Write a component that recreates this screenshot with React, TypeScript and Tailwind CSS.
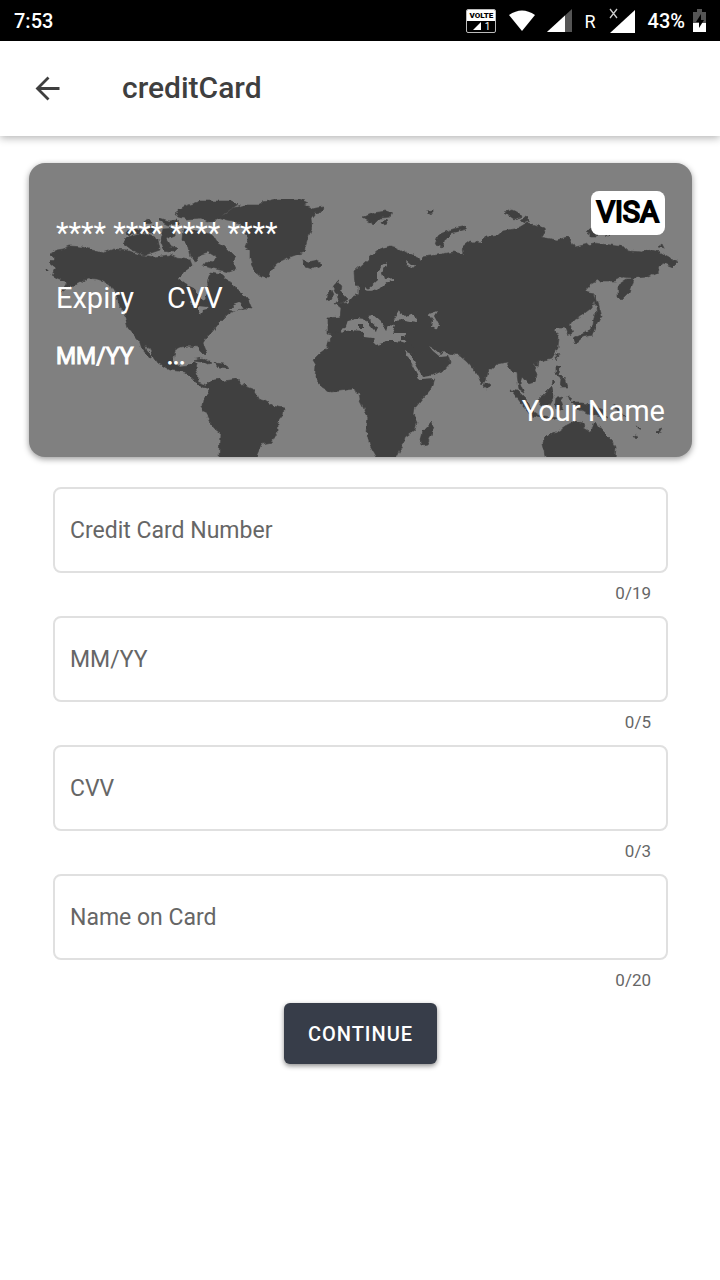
import { useState } from "react";

const LAND = [
  // North America
  "50 254 57 250 63 249 70 246 82 247 92 250 103 253 115 249 127 250 137 254 153 257 170 255 177 258 190 260 192 265 186 272 180 278 187 283 197 287 202 297 205 298 208 288 207 280 210 273 223 275 228 281 233 283 237 290 243 294 248 299 252 309 244 308 237 310 228 314 220 322 212 332 206 338 203 343 207 353 204 355 198 347 187 346 181 347 175 350 173 362 180 367 188 366 193 361 197 363 196 369 198 373 198 382 207 385 213 380 209 389 200 386 190 377 185 372 170 370 158 363 147 347 138 340 128 328 125 317 127 312 120 307 117 297 110 285 103 281 97 279 87 278 80 283 70 286 60 293 67 282 57 278 52 275 55 268 49 263 54 258",
  "139 340 144 343 147 351 152 356 149 357 142 349",
  "45 269 48 269 48 271 45 271",
  // Arctic islands
  "127 238 143 233 151 236 158 240 160 250 145 255 132 250 123 243",
  "145 221 150 219 152 223 146 224",
  "160 218 169 221 177 220 179 224 168 225 160 221",
  "126 231 136 228 143 231 150 226 156 227 153 233 141 232 127 236",
  "163 229 176 228 175 235 166 239 170 246 178 248 174 252 164 250 160 240",
  "183 229 197 231 213 235 218 243 225 247 235 257 233 265 235 270 229 272 220 270 212 268 203 266 207 261 213 262 216 257 208 252 201 254 196 261 190 257 188 247 182 240",
  "175 213 183 207 200 201 233 201 237 205 228 211 225 213 217 220 207 222 201 218 187 219 178 217",
  // Greenland and Iceland
  "218 218 225 214 233 208 245 205 260 205 263 202 277 199 300 199 308 203 304 205 312 209 323 207 322 211 315 213 311 218 312 227 308 238 305 248 304 252 290 257 282 261 277 263 271 270 269 278 260 277 252 266 250 257 250 250 245 247 248 239 245 230 240 223 228 221",
  "302 260 308 262 318 260 321 265 312 269 303 266",
  // Caribbean
  "193 360 201 358 213 363 208 364 201 361",
  "215 363 224 364 230 368 218 367",
  // South America
  "207 385 213 380 220 379 224 381 237 379 242 385 253 389 256 394 258 399 265 401 273 406 284 408 283 415 277 423 277 433 272 442 262 444 259 450 255 459 219 459 220 432 213 427 207 416 202 407 203 400 209 392",
  // Eurasia
  "328 334 328 318 340 317 341 308 336 304 347 303 352 297 359 294 359 284 364 283 366 291 372 291 366 286 355 284 354 272 365 262 373 255 380 249 390 246 398 248 407 253 418 258 420 262 423 257 437 255 453 252 463 254 462 247 470 241 480 243 487 237 497 236 503 231 520 228 528 223 545 228 546 233 540 237 557 240 567 237 571 241 575 247 593 243 610 245 625 247 627 251 643 252 647 249 660 252 668 257 678 262 673 267 663 263 660 267 658 272 647 277 635 278 623 277 615 281 597 281 591 284 585 291 593 293 596 301 590 309 578 318 572 321 570 325 574 332 568 336 565 327 558 327 555 330 559 337 558 348 552 358 538 362 532 364 537 373 535 382 528 384 522 377 520 383 524 393 519 390 517 373 512 372 507 362 497 364 488 372 486 380 482 385 478 376 473 368 468 362 460 355 447 353 450 362 442 371 433 375 422 379 400 370 350 340",
  // Africa
  "333 333 366 331 410 340 423 378 435 378 432 388 423 398 415 408 414 415 417 422 415 430 405 437 403 445 396 459 378 459 370 445 366 432 368 418 364 408 360 400 359 393 353 389 340 391 330 392 322 387 315 378 316 365 313 360 320 353 327 348 330 338",
  "432 421 434 426 431 436 427 444 422 445 421 439 423 431",
  // British Isles
  "337 282 342 285 341 291 345 296 348 299 343 303 335 304 339 299 336 293 333 287",
  "332 290 334 295 331 300 326 301 327 295",
  // Northern islands
  "363 217 373 213 386 211 392 213 390 217 380 218 372 226 368 220",
  "381 222 386 220 387 223 382 224",
  "435 245 437 238 440 234 453 229 467 226 466 229 451 233 445 239 443 247",
  "427 211 433 210 433 213 428 214",
  "504 212 513 210 519 213 521 217 514 219",
  "520 220 526 217 530 221 525 223",
  "585 232 591 229 598 236 591 236",
  "605 235 610 234 609 236",
  "658 247 662 244 664 248",
  // Eastern islands
  "627 279 634 279 630 292 622 300 618 296 618 285",
  "595 294 598 302 602 317 597 318 596 307",
  "595 313 600 317 597 323 592 335 583 337 575 344 573 338 587 332 593 325",
  "558 353 559 355 556 360 555 357",
  "534 363 539 362 538 367 535 367",
  "556 367 560 367 559 373 564 378 567 387 561 387 562 379 556 374",
  "553 380 555 382 552 385",
  "485 383 489 386 487 389 484 387",
  "511 390 518 391 527 400 532 411 538 415 558 418 552 420 532 416 521 403",
  "538 400 545 394 552 387 554 396 549 405 541 406",
  "556 398 563 397 560 401 563 410 558 410 555 404",
  "568 395 572 398 570 401",
  "572 403 582 403 593 406 604 410 608 419 597 416 587 413 579 409",
  "612 403 617 406 625 416 622 416",
  "636 425 641 429 638 430",
  "656 431 662 429 659 434",
  "633 435 638 437 636 439",
  // Australia
  "547 459 543 443 545 437 557 432 567 425 575 421 583 423 584 428 591 432 595 421 602 430 612 440 616 447 615 459",
];

const SEAS = [
  // Mediterranean
  "341 333 346 326 348 320 356 318 364 319 371 328 376 333 378 327 370 320 367 315 372 314 381 322 386 330 388 325 395 326 392 333 406 333 405 343 398 341 387 341 377 344 372 339 364 338 363 331 350 330",
  // Black Sea
  "399 311 393 321 405 320 417 322 417 319 410 314 406 316",
  // Caspian Sea
  "428 314 437 311 434 316 439 325 437 330 432 327 433 321",
  // Red Sea and the gulfs
  "405 350 410 352 414 361 421 373 423 377 435 375 435 379 420 380 411 363",
  "429 346 434 349 440 354 443 351 449 355 439 356 433 351",
  // Baltic Sea
  "387 262 382 265 377 275 378 280 367 290 377 291 385 283 394 280 394 278 384 279 382 273",
  "406 261 411 265 416 265 414 268 407 265",
  // Hudson Bay and the St Lawrence
  "179 279 184 272 191 267 197 269 204 271 208 276 207 283 208 289 205 300 201 298 196 289 187 285",
  "230 310 234 305 240 303 243 307 236 311",
  // Great Lakes
  "190 302 196 301 198 305 192 305",
  "199 306 208 307 207 309 203 310 201 315 199 312",
];

function WorldMap() {
  return (
    <svg
      className="absolute inset-0 h-full w-full"
      viewBox="29 163 663 294"
      preserveAspectRatio="none"
      aria-hidden="true"
    >
      <defs>
        <filter id="coast" x="0" y="0" width="100%" height="100%" colorInterpolationFilters="sRGB">
          <feTurbulence type="fractalNoise" baseFrequency="0.17" numOctaves="2" seed="4" />
          <feDisplacementMap in="SourceGraphic" scale="5" xChannelSelector="R" yChannelSelector="G" />
        </filter>
      </defs>
      <g filter="url(#coast)">
        {LAND.map((points) => (
          <polygon key={points} points={points} fill="#404040" stroke="#404040" strokeWidth="0.6" />
        ))}
        {SEAS.map((points) => (
          <polygon key={points} points={points} fill="#808080" />
        ))}
        <path d="M359 323h4v5h-4zM401 337h5v3h-5z" fill="#404040" />
      </g>
    </svg>
  );
}

function StatusBar() {
  return (
    <div className="flex h-[41px] items-center justify-between bg-black px-[14px] text-xl font-medium text-white">
      <span>7:53</span>
      <div className="flex items-center">
        <div className="flex h-6 w-[30px] flex-col overflow-hidden rounded-xs border border-[#bbbbbb] bg-black">
          <span className="bg-white text-center text-[8px] leading-[11px] font-black text-black">VOLTE</span>
          <span className="flex items-center justify-center gap-1 text-[10px] leading-[11px] font-normal">
            <svg width="8" height="8" viewBox="0 0 8 8" aria-hidden="true">
              <path d="M8 0v8H0z" fill="white" />
            </svg>
            1
          </span>
        </div>
        <svg className="ml-3" width="28" height="22" viewBox="0 0 28 22" aria-hidden="true">
          <path d="M1 5Q14-4 27 5L14 21z" fill="white" />
        </svg>
        <svg className="ml-[10px]" width="26" height="24" viewBox="0 0 26 24" aria-hidden="true">
          <path d="M26 0v23H1z" fill="#555555" />
          <path d="M19 6.5V23H1z" fill="white" />
        </svg>
        <span className="ml-3 pt-[3px] text-lg leading-6 font-normal">R</span>
        <svg className="ml-3" width="28" height="26" viewBox="0 0 28 26" aria-hidden="true">
          <path d="M27 2v23H2z" fill="white" />
          <path d="M2 1l7 9M9 1l-7 9" stroke="#cccccc" strokeWidth="1.3" fill="none" />
        </svg>
        <span className="ml-3">43%</span>
        <svg className="ml-2" width="13" height="23" viewBox="0 0 13 23" aria-hidden="true">
          <path d="M4 0h5v3h4v11H0V3h4z" fill="#555555" />
          <path d="M0 14h13v9H0z" fill="white" />
          <path d="M8 5L3 13h3v6l5-8H8z" fill="black" />
        </svg>
      </div>
    </div>
  );
}

type FieldProps = {
  id: string;
  label: string;
  max: number;
  value: string;
  onChange: (value: string) => void;
};

function Field({ id, label, max, value, onChange }: FieldProps) {
  return (
    <div>
      <div className="relative">
        <input
          id={id}
          value={value}
          maxLength={max}
          placeholder=" "
          onChange={(event) => onChange(event.target.value)}
          className="peer block h-[86px] w-full rounded-lg border-2 border-[#e0e0e0] bg-white px-4 text-2xl text-[#3f3f3f] outline-none focus:border-[#373d49]"
        />
        <label
          htmlFor={id}
          className="pointer-events-none absolute top-0 left-[13px] -translate-y-1/2 bg-white px-1 text-base text-[#666666] peer-placeholder-shown:top-[44px] peer-placeholder-shown:text-[23px]"
        >
          {label}
        </label>
      </div>
      <p className="h-[43px] pt-2 pr-[17px] text-right text-[17px] leading-6 text-[#666666]">
        {value.length}/{max}
      </p>
    </div>
  );
}

export default function App() {
  const [number, setNumber] = useState("");
  const [expiry, setExpiry] = useState("");
  const [cvv, setCvv] = useState("");
  const [name, setName] = useState("");

  return (
    <div className="min-h-screen bg-white font-['Roboto',sans-serif]">
      <StatusBar />
      <header className="flex h-[95px] items-center bg-white pl-8 shadow-[0_2px_8px_rgba(0,0,0,0.3)]">
        <button type="button" aria-label="Back" className="text-[#3f3f3f]">
          <svg width="30" height="30" viewBox="0 0 30 30" aria-hidden="true">
            <path d="M27.5 14.500H5.500M16.500 3.500L5.500 14.500L16.500 25.500" stroke="currentColor" strokeWidth="2.8" fill="none" />
          </svg>
        </button>
        <h1 className="ml-[60px] pb-[2px] text-[30px] leading-9 font-medium text-[#3f3f3f]">creditCard</h1>
      </header>

      <main className="pt-[27px] pr-7 pl-[29px]">
        <section className="relative h-[294px] overflow-hidden rounded-2xl bg-[#808080] text-white shadow-[0_2px_6px_rgba(0,0,0,0.4)]">
          <WorldMap />
          <div className="relative flex h-full flex-col px-[27px] py-7">
            <div className="flex h-[44px] items-start justify-between">
              <span className="pt-[22px] text-[29px] leading-10">{number || "**** **** **** ****"}</span>
              <span className="rounded-lg bg-white px-[6px] pb-[2px] text-[29px] leading-[42px] text-black [-webkit-text-stroke:2px_black]">
                VISA
              </span>
            </div>
            <dl className="mt-[43px] flex gap-[33px]">
              <div>
                <dt className="text-[29px] leading-10">Expiry</dt>
                <dd className="mt-[23px] text-[23px] leading-8 [-webkit-text-stroke:1px_white]">{expiry || "MM/YY"}</dd>
              </div>
              <div>
                <dt className="text-[29px] leading-10">CVV</dt>
                <dd className="mt-[23px] text-[23px] leading-8 [-webkit-text-stroke:1px_white]">{cvv || "..."}</dd>
              </div>
            </dl>
            <p className="mt-auto text-right text-[29px] leading-9">{name || "Your Name"}</p>
          </div>
        </section>

        <form className="px-6 pt-[30px]" onSubmit={(event) => event.preventDefault()}>
          <Field id="number" label="Credit Card Number" max={19} value={number} onChange={setNumber} />
          <Field id="expiry" label="MM/YY" max={5} value={expiry} onChange={setExpiry} />
          <Field id="cvv" label="CVV" max={3} value={cvv} onChange={setCvv} />
          <Field id="name" label="Name on Card" max={20} value={name} onChange={setName} />
          <div className="flex justify-center">
            <button
              type="submit"
              className="h-[61px] rounded-md bg-[#373d49] px-6 text-xl font-medium tracking-wider text-white shadow-[0_2px_5px_rgba(0,0,0,0.45)]"
            >
              CONTINUE
            </button>
          </div>
        </form>
      </main>
    </div>
  );
}
